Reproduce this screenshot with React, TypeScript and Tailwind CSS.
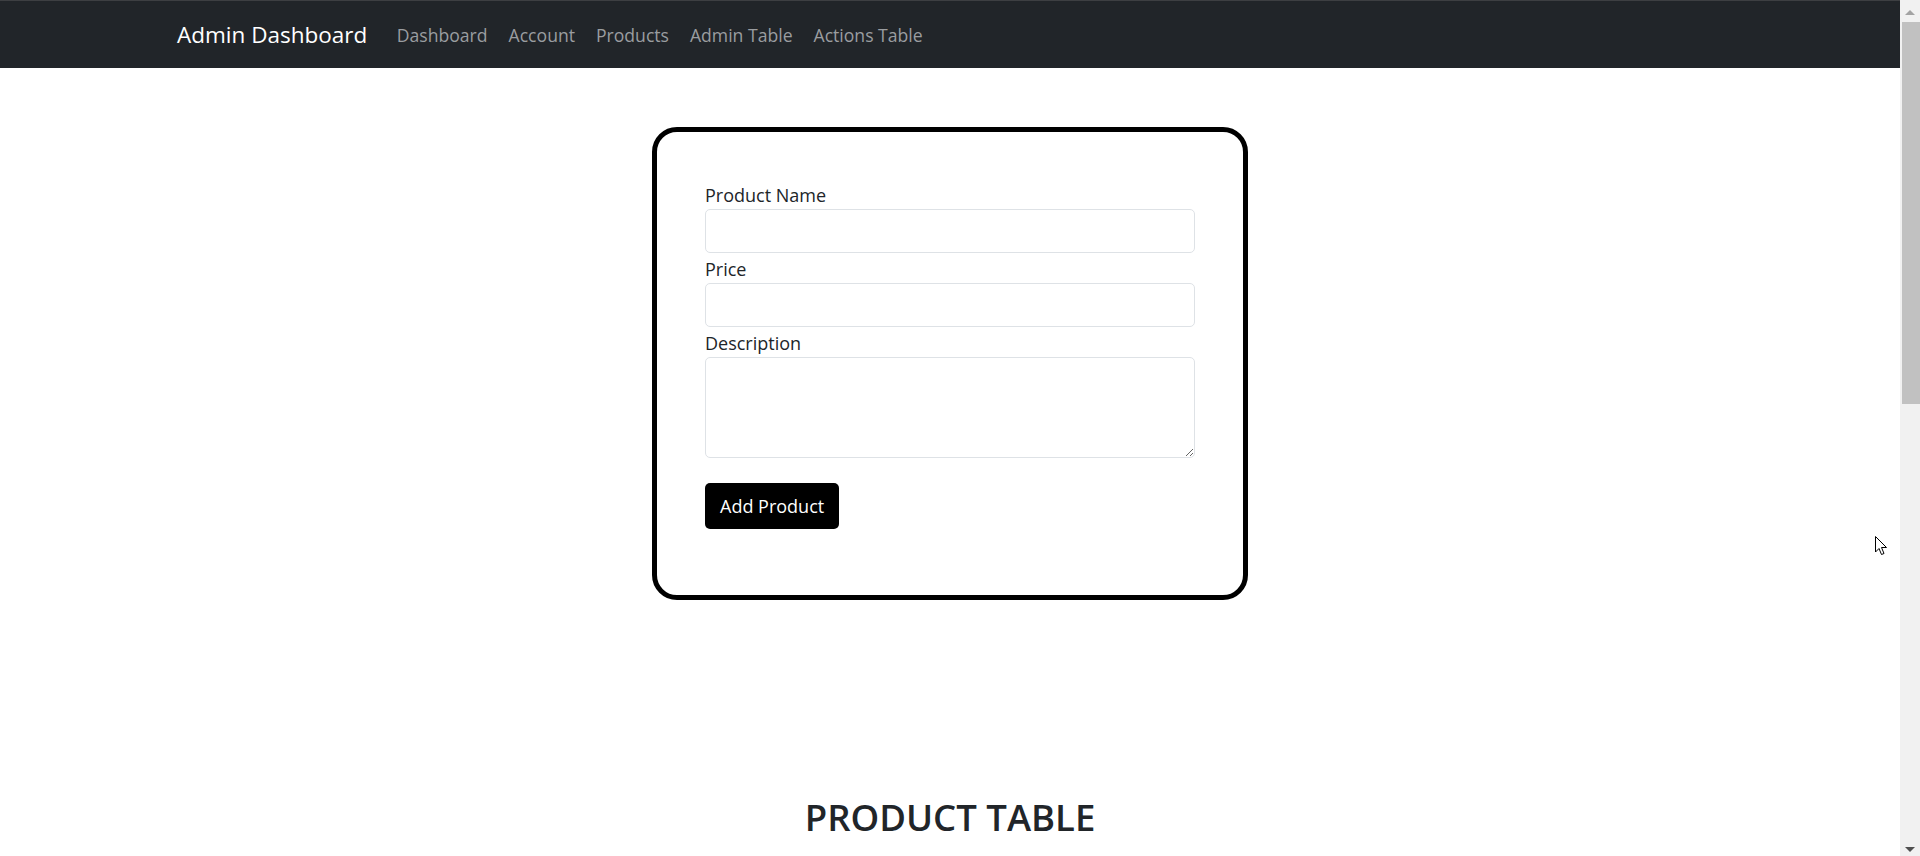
import React from "react";

const links = ["Dashboard", "Account", "Products", "Admin Table", "Actions Table"];

const Field: React.FC<{ label: string; area?: boolean }> = ({ label, area }) => (
  <div className="flex flex-col">
    <label className="h-[30px] pt-[1px] text-[18px] leading-[30px] text-[#212529]">{label}</label>
    {area ? (
      <textarea className="h-[101px] w-full rounded-[5px] border border-[#dee2e6] bg-white px-3 py-2 text-[18px] outline-none" />
    ) : (
      <input
        type="text"
        className="h-[44px] w-full rounded-[5px] border border-[#dee2e6] bg-white px-3 text-[18px] outline-none"
      />
    )}
  </div>
);

const Scrollbar: React.FC = () => (
  <div className="flex h-full w-[20px] shrink-0 flex-col items-center bg-[#f1f1f1]">
    {/* up arrow */}
    <div className="mt-[10px] h-0 w-0 border-x-[5px] border-b-[5px] border-x-transparent border-b-[#a3a3a3]" />
    {/* thumb */}
    <div className="mt-[7px] ml-[2px] h-[382px] w-[18px] self-end bg-[#c1c1c1]" />
    <div className="flex-1" />
    {/* down arrow */}
    <div className="mb-[4px] h-0 w-0 border-x-[5px] border-t-[5px] border-x-transparent border-t-[#505050]" />
  </div>
);

export default function App() {
  return (
    <div className="flex h-[856px] w-full overflow-hidden bg-white font-['Open_Sans',sans-serif]">
      <div className="relative flex-1 overflow-hidden">
        {/* Navbar */}
        <nav className="h-[68px] border-t border-[#3d3f42] bg-[#212529]">
          <div className="flex h-full items-center pt-[1px] pl-[177px]">
            <span className="mr-[19px] text-[22.5px] text-white">Admin Dashboard</span>
            <div className="flex items-center">
              {links.map((l) => (
                <a key={l} className="px-[10.5px] text-[17.6px] text-[#9a9da0]">
                  {l}
                </a>
              ))}
            </div>
          </div>
        </nav>

        {/* Add product card */}
        <div className="flex justify-center pt-[59px]">
          <div className="w-[596px] rounded-[25px] border-[5px] border-black bg-white px-[48px] pt-[47px] pb-[66px]">
            <form className="flex flex-col">
              <Field label="Product Name" />
              <Field label="Price" />
              <Field label="Description" area />
              <div className="mt-[25px]">
                <button
                  type="button"
                  className="h-[46px] rounded-[5px] bg-black px-[15px] text-[18px] text-white"
                >
                  Add Product
                </button>
              </div>
            </form>
          </div>
        </div>

        {/* Table heading */}
        <h2 className="mt-[196px] text-center text-[36.5px] leading-[43px] font-semibold text-[#212529]">
          PRODUCT TABLE
        </h2>

        {/* mouse cursor */}
        <svg
          className="absolute left-[1875px] top-[536px]"
          width="13"
          height="20"
          viewBox="0 0 13 20"
        >
          <path
            d="M0.5 0.5 L0.5 16 L4 12.5 L6.5 18.5 L9 17.5 L6.5 11.5 L11.5 11.5 Z"
            fill="white"
            stroke="black"
            strokeWidth="1"
          />
        </svg>
      </div>
      <Scrollbar />
    </div>
  );
}
